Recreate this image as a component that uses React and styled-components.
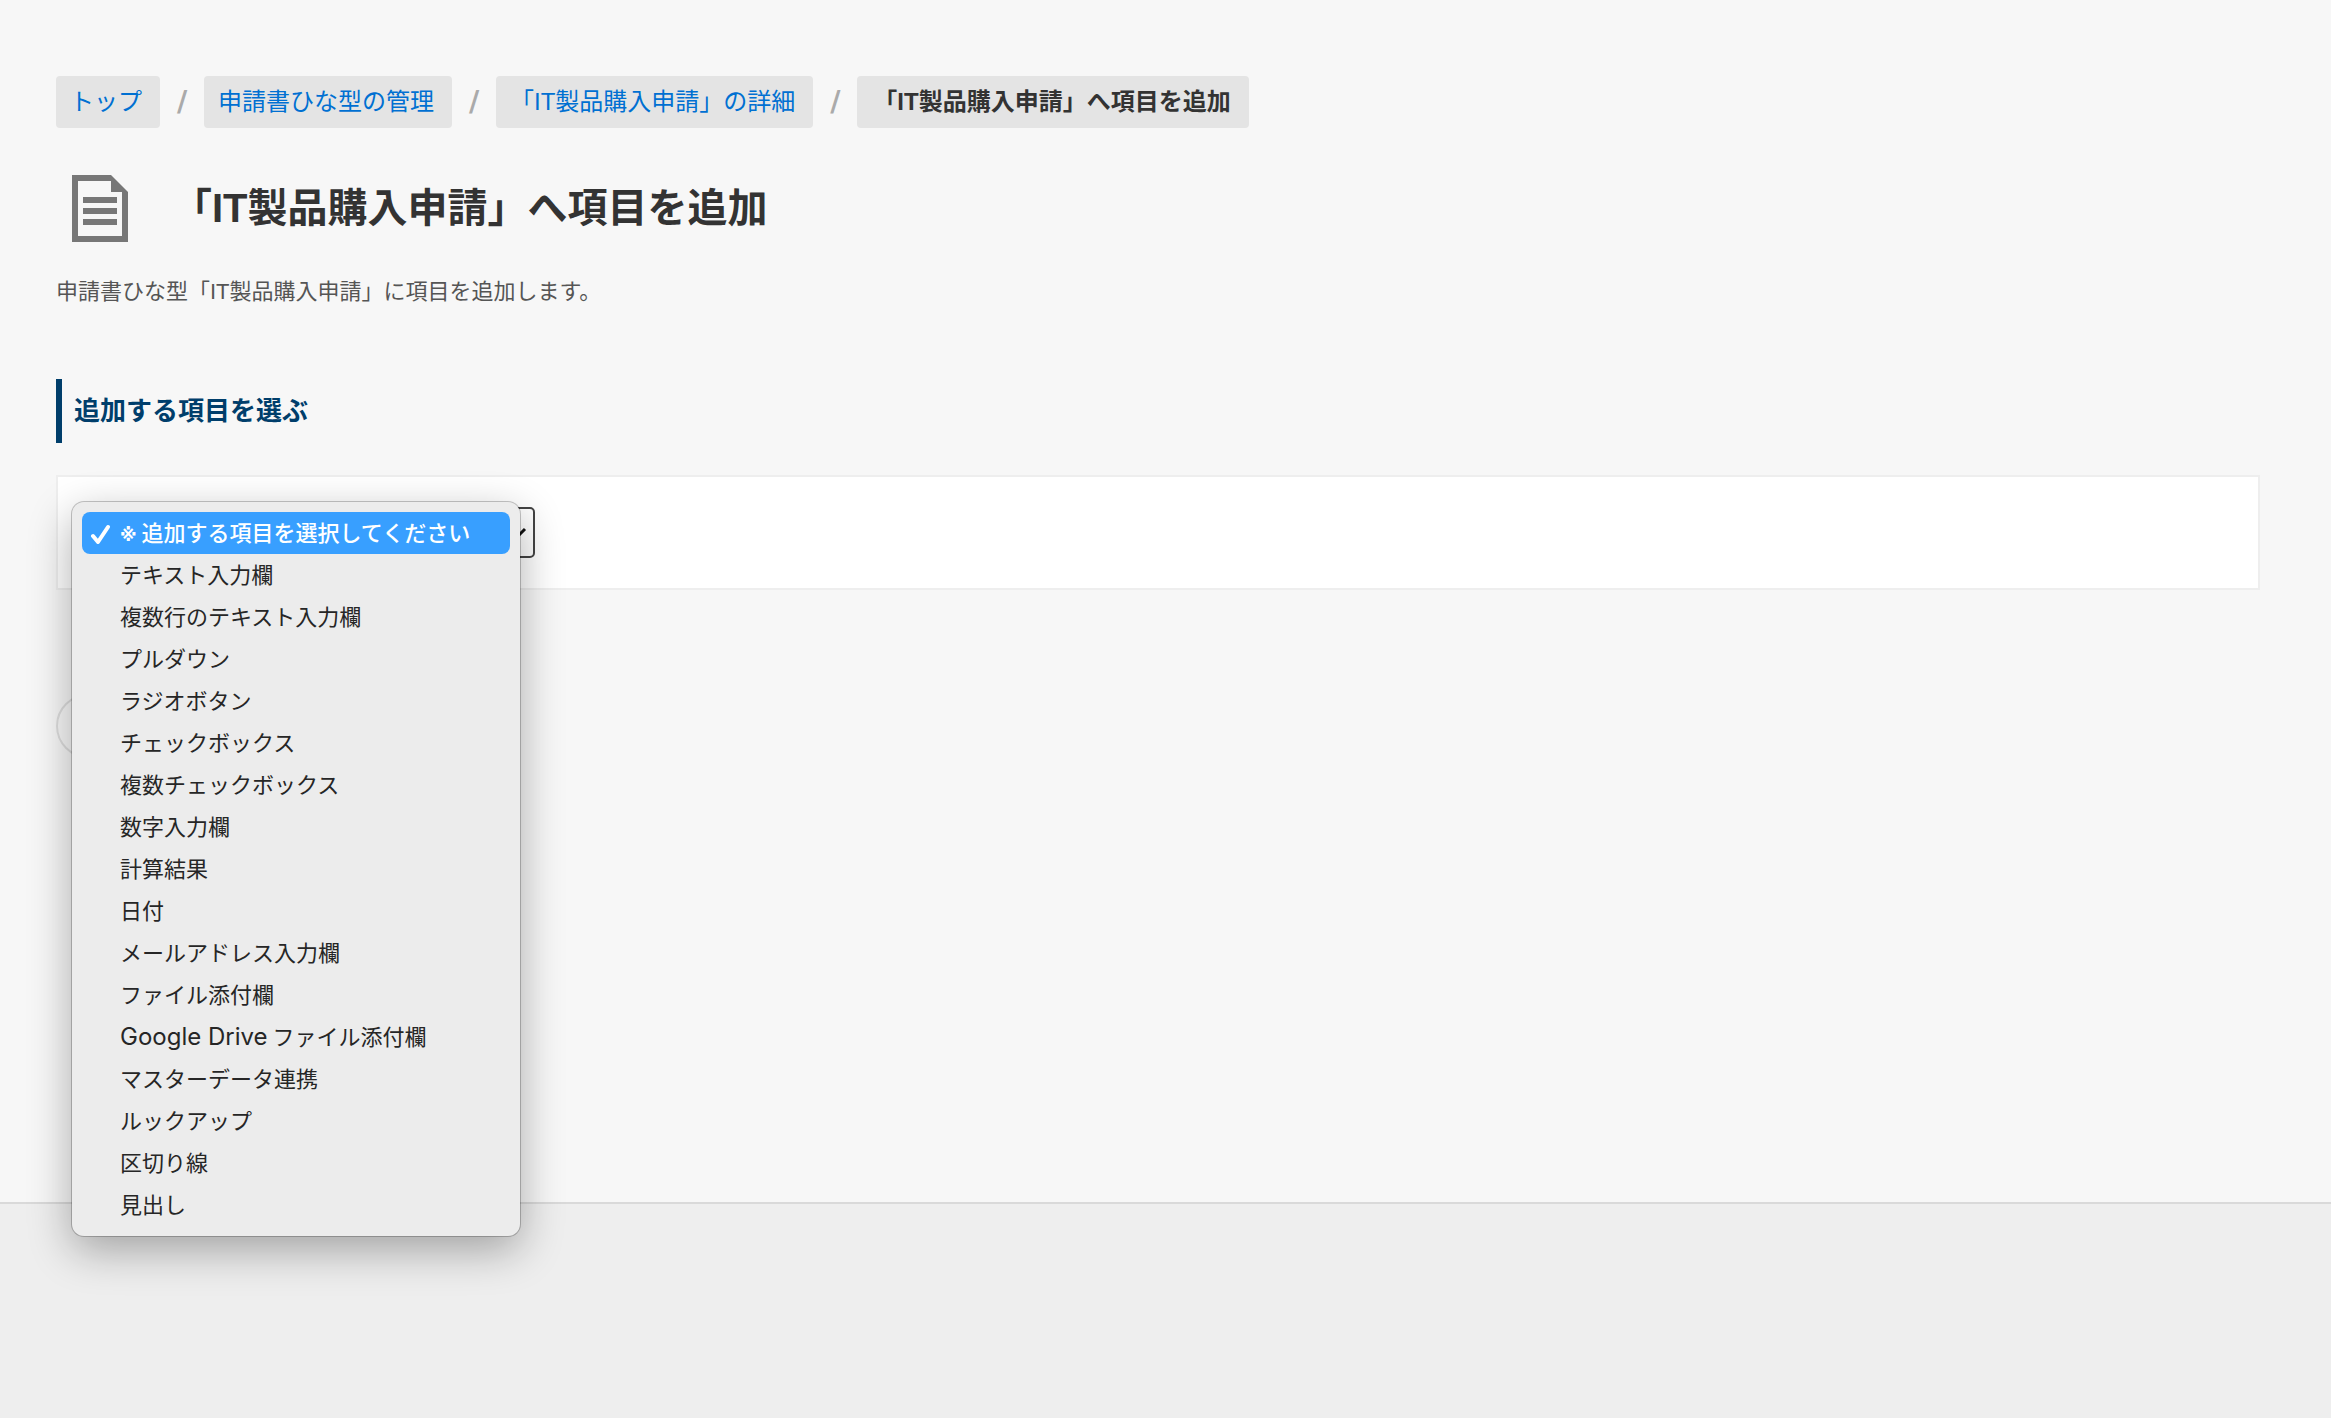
import React, { useState } from "react";
import styled, { createGlobalStyle } from "styled-components";

const GlobalStyle = createGlobalStyle`
  * {
    box-sizing: border-box;
  }
  body {
    margin: 0;
    background: #f7f7f7;
    color: #333333;
    font-family: "Liberation Sans", "Noto Sans CJK JP", sans-serif;
  }
`;

const Page = styled.div`
  min-height: 100vh;
  display: flex;
  flex-direction: column;
`;
const Main = styled.main`
  flex: 1;
  padding: 76px 71px 96px 56px;
`;
const BreadcrumbList = styled.ol`
  margin: 0;
  padding: 0;
  display: flex;
  flex-wrap: wrap;
  list-style: none;
  font-size: 24px;
  line-height: 52px;
`;
const BreadcrumbItem = styled.li`
  display: flex;
`;
const Separator = styled.span`
  width: 44px;
  color: #aaaaaa;
  font-family: "DejaVu Sans", sans-serif;
  font-size: 28px;
  font-weight: 700;
  text-align: center;
`;
const Crumb = styled.span`
  padding: 0 18px 0 16px;
  border-radius: 4px;
  background: #e4e4e4;
  font-weight: 700;
`;
const CrumbLink = styled.a`
  padding: 0 18px 0 14px;
  border-radius: 4px;
  background: #e4e4e4;
  color: #0070d2;
  text-decoration: none;
`;
const TitleRow = styled.div`
  margin-top: 44px;
  padding-left: 16px;
  display: flex;
  align-items: center;
  gap: 44px;
`;
const Title = styled.h1`
  margin: 0;
  font-size: 40px;
  line-height: 72px;
`;
const Description = styled.p`
  margin: 32px 0 0;
  color: #555555;
  font-size: 22px;
  line-height: 32px;
`;
const SectionTitle = styled.h2`
  margin: 71px 0 32px;
  padding-left: 12px;
  border-left: 6px solid #003e6b;
  color: #003e6b;
  font-size: 26px;
  line-height: 64px;
`;
const Card = styled.section`
  padding: 30px 20px;
  border: 2px solid #eeeeee;
  background: #ffffff;
`;
const SelectBox = styled.div`
  position: relative;
  width: 457px;
`;
const Select = styled.select`
  display: block;
  width: 100%;
  height: 51px;
  padding: 0 40px 0 12px;
  appearance: none;
  border: 2px solid #444444;
  border-radius: 5px;
  background: #ffffff;
  color: #333333;
  font-family: inherit;
  font-size: 24px;
`;
const Arrow = styled.svg`
  position: absolute;
  top: 20px;
  right: 8px;
  pointer-events: none;
`;
const Menu = styled.ul`
  position: absolute;
  top: -5px;
  left: -6px;
  z-index: 10;
  width: 448px;
  margin: 0;
  padding: 10px;
  list-style: none;
  border-radius: 12px;
  background: #ececec;
  box-shadow: 0 0 0 1px rgba(0, 0, 0, 0.22), 0 14px 44px rgba(0, 0, 0, 0.32);
`;
const MenuItem = styled.li`
  display: flex;
  height: 42px;
  padding-right: 10px;
  border-radius: 8px;
  background: ${(props) => (props.$active ? "#389fff" : "transparent")};
  color: ${(props) => (props.$active ? "#ffffff" : "#262626")};
  font-family: "Noto Sans CJK JP", sans-serif;
  font-size: 22px;
  font-weight: ${(props) => (props.$active ? 500 : 400)};
  line-height: 38px;
  white-space: pre;
  cursor: default;
`;
const CheckSlot = styled.span`
  display: flex;
  align-items: center;
  width: 38px;
  padding-left: 8px;
`;
const Latin = styled.span`
  font-family: Inter, sans-serif;
  font-size: 24px;
`;
const Mark = styled.span`
  font-family: "DejaVu Sans", "Noto Sans CJK JP", sans-serif;
  font-size: 17px;
  font-weight: 700;
`;
const BackButton = styled.button`
  display: block;
  width: 240px;
  height: 64px;
  margin-top: 104px;
  border: 2px solid #dddddd;
  border-radius: 32px;
  background: #f7f7f7;
`;
const Footer = styled.footer`
  min-height: 216px;
  border-top: 2px solid #d9d9d9;
  background: #eeeeee;
`;

const crumbs = ["トップ", "申請書ひな型の管理", "「IT製品購入申請」の詳細"];

const fields = [
  { mark: "※", label: " 追加する項目を選択してください" },
  { label: "テキスト入力欄" },
  { label: "複数行のテキスト入力欄" },
  { label: "プルダウン" },
  { label: "ラジオボタン" },
  { label: "チェックボックス" },
  { label: "複数チェックボックス" },
  { label: "数字入力欄" },
  { label: "計算結果" },
  { label: "日付" },
  { label: "メールアドレス入力欄" },
  { label: "ファイル添付欄" },
  { latin: "Google Drive", label: " ファイル添付欄" },
  { label: "マスターデータ連携" },
  { label: "ルックアップ" },
  { label: "区切り線" },
  { label: "見出し" },
];

const DocumentIcon = () => (
  <svg width="56" height="72" viewBox="0 0 56 72" aria-hidden="true">
    <path
      fill="#777777"
      fillRule="evenodd"
      d="M0 3H39L56 20V70H0ZM6 9V64H50V20H39V9Z"
    />
    <path fill="#777777" d="M11 25H45V31H11ZM11 36H45V42H11ZM11 47H45V53H11Z" />
  </svg>
);

const CheckIcon = () => (
  <svg width="22" height="22" viewBox="0 0 22 22" aria-hidden="true">
    <path
      d="M3 14L8 20L18 5"
      fill="none"
      stroke="#ffffff"
      strokeWidth="4"
      strokeLinecap="round"
      strokeLinejoin="round"
    />
  </svg>
);

const FieldSelect = () => {
  const [selected, setSelected] = useState(0);
  const [open, setOpen] = useState(true);

  const choose = (index) => {
    setSelected(index);
    setOpen(false);
  };

  return (
    <SelectBox>
      <Select
        aria-label="追加する項目"
        value={selected}
        onChange={(e) => choose(Number(e.target.value))}
      >
        {fields.map((e, index) => (
          <option key={index} value={index}>
            {`${e.mark || e.latin || ""}${e.label}`}
          </option>
        ))}
      </Select>
      <Arrow width="20" height="12" viewBox="0 0 20 12" aria-hidden="true">
        <path d="M2 2L10 10L18 2" fill="none" stroke="#111111" strokeWidth="3" />
      </Arrow>
      {open && (
        <Menu role="listbox" aria-label="追加する項目">
          {fields.map((e, index) => (
            <MenuItem
              key={index}
              role="option"
              aria-selected={index === selected}
              $active={index === selected}
              onClick={() => choose(index)}
            >
              <CheckSlot>{index === selected && <CheckIcon />}</CheckSlot>
              <span>
                {e.mark && <Mark>{e.mark}</Mark>}
                {e.latin && <Latin>{e.latin}</Latin>}
                {e.label}
              </span>
            </MenuItem>
          ))}
        </Menu>
      )}
    </SelectBox>
  );
};

const App = () => {
  return (
    <Page>
      <GlobalStyle />
      <Main>
        <nav aria-label="パンくずリスト">
          <BreadcrumbList>
            {crumbs.map((e) => (
              <BreadcrumbItem key={e}>
                <CrumbLink href="#">{e}</CrumbLink>
                <Separator aria-hidden="true">/</Separator>
              </BreadcrumbItem>
            ))}
            <BreadcrumbItem>
              <Crumb aria-current="page">「IT製品購入申請」へ項目を追加</Crumb>
            </BreadcrumbItem>
          </BreadcrumbList>
        </nav>
        <TitleRow>
          <DocumentIcon />
          <Title>「IT製品購入申請」へ項目を追加</Title>
        </TitleRow>
        <Description>
          申請書ひな型「IT製品購入申請」に項目を追加します。
        </Description>
        <SectionTitle>追加する項目を選ぶ</SectionTitle>
        <Card>
          <FieldSelect />
        </Card>
        <BackButton type="button" aria-label="戻る" />
      </Main>
      <Footer />
    </Page>
  );
};

export default App;
